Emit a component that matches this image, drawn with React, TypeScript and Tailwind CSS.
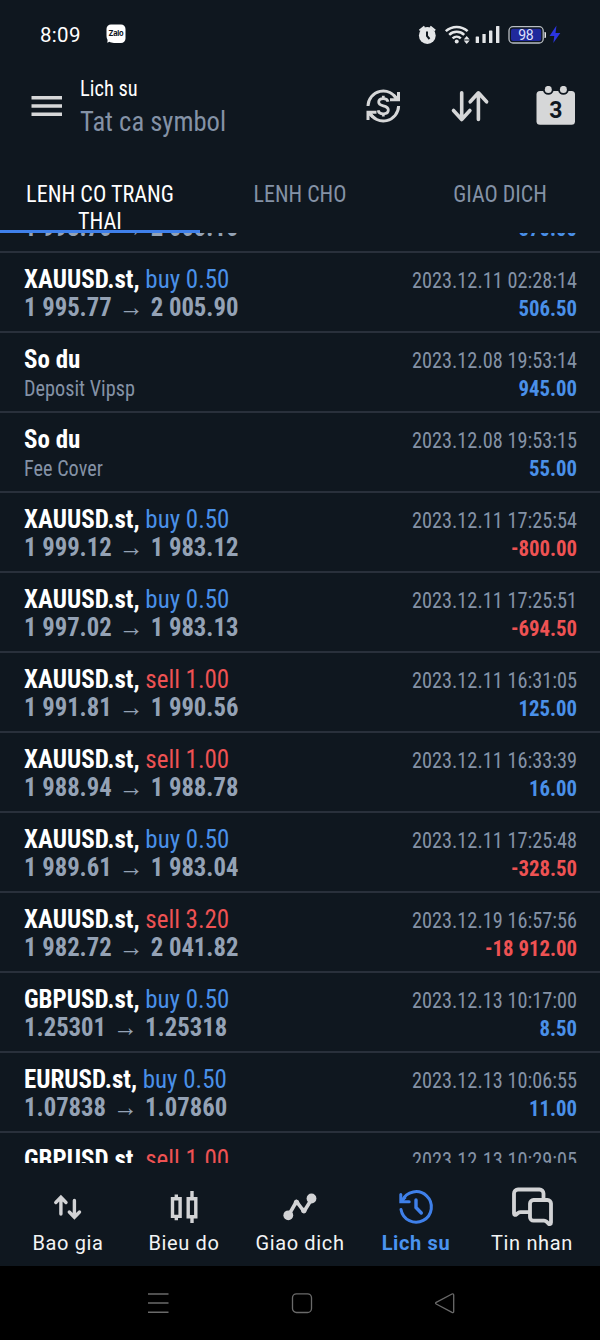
import type { ReactNode } from 'react';

type Deal = {
  title: string;
  side?: 'buy' | 'sell';
  volume?: string;
  from?: string;
  to?: string;
  note?: string;
  time: string;
  profit: string;
};

const deals: Deal[] = [
  { title: 'XAUUSD.st', side: 'buy', volume: '0.50', from: '1 993.70', to: '2 005.10', time: '2023.12.11 02:28:12', profit: '570.00' },
  { title: 'XAUUSD.st', side: 'buy', volume: '0.50', from: '1 995.77', to: '2 005.90', time: '2023.12.11 02:28:14', profit: '506.50' },
  { title: 'So du', note: 'Deposit Vipsp', time: '2023.12.08 19:53:14', profit: '945.00' },
  { title: 'So du', note: 'Fee Cover', time: '2023.12.08 19:53:15', profit: '55.00' },
  { title: 'XAUUSD.st', side: 'buy', volume: '0.50', from: '1 999.12', to: '1 983.12', time: '2023.12.11 17:25:54', profit: '-800.00' },
  { title: 'XAUUSD.st', side: 'buy', volume: '0.50', from: '1 997.02', to: '1 983.13', time: '2023.12.11 17:25:51', profit: '-694.50' },
  { title: 'XAUUSD.st', side: 'sell', volume: '1.00', from: '1 991.81', to: '1 990.56', time: '2023.12.11 16:31:05', profit: '125.00' },
  { title: 'XAUUSD.st', side: 'sell', volume: '1.00', from: '1 988.94', to: '1 988.78', time: '2023.12.11 16:33:39', profit: '16.00' },
  { title: 'XAUUSD.st', side: 'buy', volume: '0.50', from: '1 989.61', to: '1 983.04', time: '2023.12.11 17:25:48', profit: '-328.50' },
  { title: 'XAUUSD.st', side: 'sell', volume: '3.20', from: '1 982.72', to: '2 041.82', time: '2023.12.19 16:57:56', profit: '-18 912.00' },
  { title: 'GBPUSD.st', side: 'buy', volume: '0.50', from: '1.25301', to: '1.25318', time: '2023.12.13 10:17:00', profit: '8.50' },
  { title: 'EURUSD.st', side: 'buy', volume: '0.50', from: '1.07838', to: '1.07860', time: '2023.12.13 10:06:55', profit: '11.00' },
  { title: 'GBPUSD.st', side: 'sell', volume: '1.00', from: '1.25318', to: '1.25301', time: '2023.12.13 10:29:05', profit: '17.00' },
];

function StatusBar() {
  return (
    <div className="flex h-[68px] items-center pl-10 pr-[39px] text-[#e4e6e8]">
      <span className="w-[66px] pt-[2px] font-['Roboto'] text-[20.500px] font-[450] font-stretch-normal tracking-[0.3px] text-white">8:09</span>
      <svg width="20" height="20" viewBox="0 0 20 20">
        <path d="M5 0.5h10a4.5 4.5 0 0 1 4.5 4.5v9.500a4.500 4.500 0 0 1-4.500 4.500H8c-2 0-3.500-.5-4.500-1.200-.8.6-1.700.8-2.500.7.6-.8.8-1.700.5-2.700C.8 14.800.5 13.500.5 12V5A4.500 4.500 0 0 1 5 .5z" fill="#fff" />
        <text x="10" y="12.200" textAnchor="middle" fontFamily="Inter, sans-serif" fontSize="7.500" fontWeight="700" letterSpacing="-0.300" fill="#0f171f">Zalo</text>
      </svg>
      <div className="ml-auto flex items-center pt-px">
        <svg width="144" height="20" viewBox="417 25 144 20" fill="currentColor">
          {/* alarm */}
          <circle cx="427.300" cy="35.500" r="8.400" />
          <path d="M419.500 30.500l5-4M435.200 30.500l-5-4" stroke="currentColor" strokeWidth="2" />
          <path d="M427 31.500v4.500l2.500 3" fill="none" stroke="#0f171f" strokeWidth="2" />
          {/* wifi */}
          <g fill="none" stroke="currentColor" strokeWidth="2.500">
            <path d="M445.800 31.200a16 16 0 0 1 21.800 0" />
            <path d="M449.200 34.800a11 11 0 0 1 15 0" />
            <path d="M452.600 38.400a6 6 0 0 1 8.200 0" />
          </g>
          <circle cx="456.700" cy="41.500" r="2" />
          <path d="M466.700 36l3 3.600h-6zM466.700 44l3-3.400h-6z" />
          {/* signal */}
          <rect x="475.700" y="36.500" width="3.300" height="6.500" rx="0.600" />
          <rect x="482.400" y="34" width="3.300" height="9" rx="0.600" />
          <rect x="489" y="30.500" width="3.400" height="12.500" rx="0.600" />
          <rect x="496" y="26" width="3.400" height="17" rx="0.600" />
          {/* battery */}
          <rect x="509" y="26.700" width="34.200" height="16.300" rx="4" fill="none" stroke="#b9bec4" strokeWidth="1.300" />
          <rect x="511" y="28.700" width="30.200" height="12.300" rx="2" fill="#20299c" />
          <path d="M544.500 32h.5a1 1 0 0 1 1 1v4a1 1 0 0 1-1 1h-.5z" />
          <text x="525.800" y="39.800" textAnchor="middle" fontFamily="Roboto, sans-serif" fontSize="14" fontWeight="400" letterSpacing="-0.400" style={{ fontStretch: '100%' }} fill="#dfe1fa">98</text>
          <path d="M556.500 25.500l-7 10.500h4.800l-1 7 7-10h-4.800z" fill="#2b35e0" />
        </svg>
      </div>
    </div>
  );
}

function Header() {
  return (
    <header className="flex h-[112px] pl-[31px] pr-6 text-[#d6d7d8]">
      <svg width="31" height="22" viewBox="0 0 31 22" className="mt-[27px]" fill="currentColor">
        <path d="M.5 1h30.500v3.500H.5zM.5 9.300h30.500v3.500H.5zM.5 17.600h30.500v3.500H.5z" />
      </svg>
      <div className="ml-[18px] mt-[8px]">
        <p className="origin-left scale-x-[0.93] text-[22px] leading-[26px] text-white">Lich su</p>
        <p className="mt-[3px] origin-left scale-x-[0.95] text-[28px] leading-[34px] text-[#8492a6]">Tat ca symbol</p>
      </div>
      <div className="ml-auto mt-[18px] flex h-10 gap-[46px]">
        <svg width="39" height="40" viewBox="365 86 39 40" fill="none" stroke="currentColor" strokeWidth="3">
          <path d="M368 106a15.300 15.300 0 0 1 29-6.500" />
          <path d="M398.600 106a15.300 15.300 0 0 1-29 6.500" />
          <path d="M398.500 92v7.800h-8.500M393.500 95l5 5" />
          <path d="M368 120v-7.800h8.500M373 117l-5-5" />
          <path d="M388 101.800c-.4-2-2.200-3.200-4.700-3.200-2.700 0-4.600 1.400-4.600 3.500 0 2.300 1.800 3.100 4.600 3.800 3 .7 5 1.600 5 4.100s-2 3.800-5 3.800c-2.900 0-4.800-1.400-5.100-3.600M383.300 95.800v3M383.300 113.500v3" strokeWidth="2.800" />
        </svg>
        <svg width="40" height="40" viewBox="450 86 40 40" fill="none" stroke="currentColor" strokeWidth="3.600" strokeLinecap="round" strokeLinejoin="round">
          <path d="M461.700 92.800v26.500M453.500 110.500l8.200 9 8.200-9" />
          <path d="M478.400 119.500v-26.500M470.200 101.800l8.200-9 8.200 9" />
        </svg>
        <svg width="40" height="40" viewBox="536 86 40 40" fill="currentColor">
          <rect x="536.500" y="91" width="38.500" height="33.700" rx="3.500" />
          <circle cx="548.300" cy="89.400" r="5.300" fill="#0f171f" />
          <circle cx="563.400" cy="89.400" r="5.300" fill="#0f171f" />
          <circle cx="548.300" cy="89.400" r="3.500" />
          <circle cx="563.400" cy="89.400" r="3.500" />
          <text x="555.800" y="117.500" textAnchor="middle" fontFamily="Roboto, sans-serif" fontSize="23" fontWeight="700" style={{ fontStretch: '100%' }} fill="#0f171f">3</text>
        </svg>
      </div>
    </header>
  );
}

function Tabs() {
  return (
    <div className="grid h-[53px] grid-cols-3 text-center text-[23px] leading-[27px] text-[#8492a6]">
      <div className="border-b-[3px] border-[#3f80ea] text-white">
        <p className="mx-auto h-[50px] w-[160px] scale-x-[0.965] pt-px">LENH CO TRANG THAI</p>
      </div>
      <div className="scale-x-[0.955] pt-px">LENH CHO</div>
      <div className="scale-x-[0.955] pt-px">GIAO DICH</div>
    </div>
  );
}

function DealRow({ deal }: { deal: Deal }) {
  const sideColor = deal.side === 'sell' ? 'text-[#ee5253]' : 'text-[#4a90e8]';
  const profitColor = deal.profit.startsWith('-') ? 'text-[#ee5253]' : 'text-[#4a90e8]';

  return (
    <div className="flex h-20 shrink-0 justify-between border-b-2 border-[#29303b] pl-[23.500px] pr-[23.500px] pt-[12px] whitespace-nowrap">
      <div>
        <p className="origin-left scale-x-[0.96] text-[26px] leading-[28px] text-white">
          <span className="font-bold">{deal.side ? `${deal.title},` : deal.title}</span>
          {deal.side && <span className={sideColor}> {deal.side} {deal.volume}</span>}
        </p>
        {deal.note ? (
          <p className="origin-left scale-x-[0.92] pt-[2px] text-[22px] leading-[28px] text-[#8492a6]">{deal.note}</p>
        ) : (
          <p className="flex origin-left scale-x-[0.95] text-[26px] leading-[28px] font-bold text-[#94a2b5]">
            <span>{deal.from}</span>
            <span className="w-[41px] text-center font-['Liberation_Sans'] text-[26px] font-normal">→</span>
            <span>{deal.to}</span>
          </p>
        )}
      </div>
      <div className="pt-[2px] text-right text-[22px] leading-[28px]">
        <p className="origin-right scale-x-[0.922] text-[#8492a6]">{deal.time}</p>
        <p className={`origin-right scale-x-[0.945] font-bold ${profitColor}`}>{deal.profit}</p>
      </div>
    </div>
  );
}

function NavItem({ label, active, children }: { label: string; active?: boolean; children: ReactNode }) {
  return (
    <div className={`flex flex-col items-center ${active ? 'text-[#3f80ea]' : 'text-[#d2d3d5]'}`}>
      <svg width="44" height="44" viewBox="0 0 44 44" fill="none" stroke="currentColor" strokeWidth="3.400">
        {children}
      </svg>
      <span className={`mt-px text-[20px] leading-6 tracking-[0.65px] ${active ? 'font-bold text-[#4a93f0]' : 'text-[#f3f4f5]'}`}>{label}</span>
    </div>
  );
}

function BottomNav() {
  return (
    <nav className="grid h-[103px] shrink-0 grid-cols-5 px-[10px] pt-[23px] font-['Roboto',sans-serif] font-stretch-normal">
      <NavItem label="Bao gia">
        <path d="M14.900 28V11.500M9.800 16.500l5.100-5.200 5.100 5.200" strokeLinecap="round" />
        <path d="M28.400 14.500V31M23.300 26l5.100 5.200 5.100-5.200" strokeLinecap="round" />
      </NavItem>
      <NavItem label="Bieu do">
        <path d="M10.500 12.800h7.600v17.600h-7.600zM14.300 8.500v4M14.300 30.500v3.700" strokeWidth="3.400" />
        <path d="M26.200 12.800h7.600v18h-7.600zM30 5v7.500M30 31v6" strokeWidth="3.400" />
      </NavItem>
      <NavItem label="Giao dich">
        <path d="M10.500 29.300l8-13.800 7.500 10 8-13" strokeLinejoin="round" strokeWidth="3.600" />
        <circle cx="10.300" cy="29.300" r="4.900" fill="currentColor" stroke="none" />
        <circle cx="33.500" cy="12.500" r="4.900" fill="currentColor" stroke="none" />
        <circle cx="18.500" cy="16.500" r="2.700" fill="currentColor" stroke="none" />
        <circle cx="25.800" cy="24.500" r="2.700" fill="currentColor" stroke="none" />
      </NavItem>
      <NavItem label="Lich su" active>
        <path d="M7 23.500a15.300 15.300 0 1 0 1.200-9" strokeLinecap="round" strokeWidth="3" />
        <path d="M6.800 8.500v7.200h8.400" strokeLinecap="round" strokeWidth="3" />
        <path d="M7 15.500l4.500-4.500" strokeWidth="3" />
        <path d="M22 14v7.500l5.300 5.500" strokeLinecap="round" strokeWidth="3.400" />
      </NavItem>
      <NavItem label="Tin nhan">
        <path d="M33.500 13V7.500a4 4 0 0 0-4-4H8a4 4 0 0 0-4 4v20c0 1.500 1.300 1.800 2.300 1l1.700-1.500c.8-.6 1.500-.9 2.500-.9H19" strokeLinecap="round" strokeWidth="3.800" />
        <path d="M23.500 14h14a3.500 3.500 0 0 1 3.500 3.500v19c0 1.800-1.500 2-2.500 1.200l-2-2c-.8-.8-1.500-1-2.500-1H23.500a3.500 3.500 0 0 1-3.500-3.500V17.500a3.500 3.500 0 0 1 3.500-3.500z" strokeWidth="3.800" />
      </NavItem>
    </nav>
  );
}

function SystemNav() {
  return (
    <div className="flex h-[74px] shrink-0 items-center justify-between bg-black pl-[147px] pr-[144px]">
      <svg width="22" height="22" viewBox="0 0 22 22" fill="none" stroke="#6a6a6a" strokeWidth="1.400">
        <path d="M1 2h20.500M1 11h20.500M1 20.300h20.500" />
      </svg>
      <svg width="22" height="22" viewBox="0 0 22 22" fill="none" stroke="#6a6a6a" strokeWidth="1.300">
        <rect x="1.500" y="1.800" width="19" height="18.700" rx="4" />
      </svg>
      <svg width="22" height="22" viewBox="0 0 22 22" fill="none" stroke="#6a6a6a" strokeWidth="1.300" strokeLinejoin="round">
        <path d="M2.200 10.300L18 2c1-.5 1.700 0 1.700 1v16.500c0 1-.7 1.400-1.700.9L2.200 12c-.8-.4-.8-1.300 0-1.700z" />
      </svg>
    </div>
  );
}

export default function App() {
  return (
    <div className="flex h-[1340px] w-[600px] flex-col overflow-hidden bg-[#0f171f] font-['Roboto_Condensed','Roboto',sans-serif] font-stretch-condensed">
      <StatusBar />
      <Header />
      <Tabs />
      <main className="min-h-0 flex-1 overflow-hidden">
        <div className="-mt-[60px] flex flex-col">
          {deals.map((deal) => (
            <DealRow key={deal.time} deal={deal} />
          ))}
        </div>
      </main>
      <BottomNav />
      <SystemNav />
    </div>
  );
}
